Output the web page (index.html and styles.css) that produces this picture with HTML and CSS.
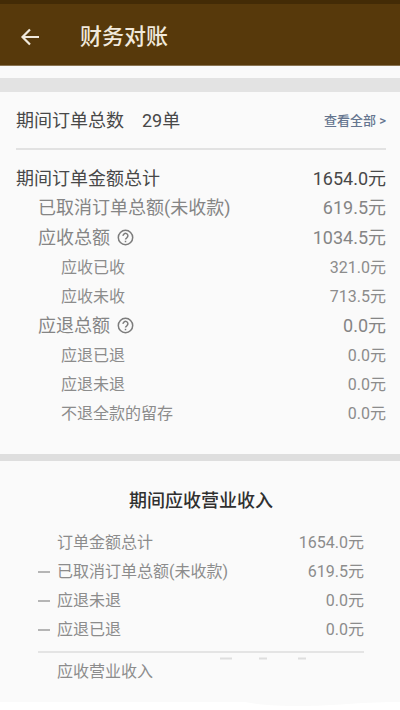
FILE: index.html
```
<!DOCTYPE html>
<html lang="zh">
<head>
    <meta charset="UTF-8">
    <meta name="viewport" content="width=device-width, initial-scale=1.0">
    <title>财务对账</title>
    <link rel="stylesheet" href="styles.css">
</head>
<body>

<header class="topbar">
    <button type="button" class="back" aria-label="返回">
        <svg width="20" height="18" viewBox="0 0 20 18"><path d="M10 1.5 2.5 9l7.500 7.500M2.500 9H19" fill="none" stroke="#f1e9dc" stroke-width="2.200"/></svg>
    </button>
    <h1>财务对账</h1>
</header>

<main>
    <!-- 订单汇总 -->
    <section class="orders">
        <div class="count">
            <h2>期间订单总数</h2>
            <span class="count-num">29单</span>
            <a href="#all">查看全部 &gt;</a>
        </div>
        <dl class="summary">
            <div class="row total"><dt>期间订单金额总计</dt><dd>1654.0元</dd></div>
            <div class="row level1"><dt>已取消订单总额(未收款)</dt><dd>619.5元</dd></div>
            <div class="row level1 group">
                <dt>应收总额
                    <button type="button" class="help" aria-label="应收总额说明">
                        <svg width="17" height="17" viewBox="0 0 17 17" fill="none" stroke="#7c7c7c" stroke-width="1.500"><circle cx="8.500" cy="8.500" r="7.200"/><path d="M6.100 6.900a2.400 2.400 0 1 1 3.800 1.800C9 9.300 8.500 9.600 8.500 10.600M8.500 11.700v1.500"/></svg>
                    </button>
                </dt>
                <dd>1034.5元</dd>
            </div>
            <div class="row level2 first"><dt>应收已收</dt><dd>321.0元</dd></div>
            <div class="row level2"><dt>应收未收</dt><dd>713.5元</dd></div>
            <div class="row level1">
                <dt>应退总额
                    <button type="button" class="help" aria-label="应退总额说明">
                        <svg width="17" height="17" viewBox="0 0 17 17" fill="none" stroke="#7c7c7c" stroke-width="1.500"><circle cx="8.500" cy="8.500" r="7.200"/><path d="M6.100 6.900a2.400 2.400 0 1 1 3.800 1.800C9 9.300 8.500 9.600 8.500 10.600M8.500 11.700v1.500"/></svg>
                    </button>
                </dt>
                <dd>0.0元</dd>
            </div>
            <div class="row level2 first"><dt>应退已退</dt><dd>0.0元</dd></div>
            <div class="row level2"><dt>应退未退</dt><dd>0.0元</dd></div>
            <div class="row level2"><dt>不退全款的留存</dt><dd>0.0元</dd></div>
        </dl>
    </section>

    <!-- 营业收入 -->
    <section class="income">
        <h2>期间应收营业收入</h2>
        <dl class="detail">
            <div class="row"><dt>订单金额总计</dt><dd>1654.0元</dd></div>
            <div class="row minus"><dt>已取消订单总额(未收款)</dt><dd>619.5元</dd></div>
            <div class="row minus"><dt>应退未退</dt><dd>0.0元</dd></div>
            <div class="row minus"><dt>应退已退</dt><dd>0.0元</dd></div>
            <div class="row result">
                <dt>应收营业收入</dt>
                <dd><svg width="150" height="20" viewBox="0 0 150 20"><path d="M6 1.500h12M45 1.500h8M84 1.500h8" stroke="#dedede" stroke-width="2"/></svg></dd>
            </div>
        </dl>
    </section>
</main>

<svg class="edge" viewBox="0 0 400 6" preserveAspectRatio="none"><path d="M245 0C262 3 280 4 302 4 330 4 350 1 390 0Z" fill="#fafafa"/></svg>

</body>
</html>
```
FILE: styles.css
```
* { box-sizing: border-box; }
body { margin: 0; background: #fff; color: #484848; font-family: Roboto, "Noto Sans CJK SC", sans-serif; font-size: 18px; }
h1, h2, dl, dd { margin: 0; }
h2 { font-size: 18px; font-weight: 400; }
button { padding: 0; border: 0; background: none; cursor: pointer; }
svg { display: block; }

.topbar { display: flex; align-items: center; gap: 40px; height: 66px; padding: 4px 20px 0; background: #57390b; border-top: 4px solid #432b06; border-bottom: 1px solid #8a7452; }
.topbar h1 { color: #f1e9dc; font-size: 22px; font-weight: 500; line-height: 32px; }

main { padding-top: 12px; background: #fafafa; }

.orders { padding: 0 14px 26px 16px; border-top: 14px solid #e3e3e3; }
.count { display: flex; align-items: center; padding: 14px 0 12px; line-height: 30px; border-bottom: 2px solid #e2e2e2; }
.count-num { margin-left: 18px; }
.count a { margin-left: auto; color: #65758f; font-size: 13px; font-weight: 500; text-decoration: none; }

.summary { padding-top: 14px; }
.row { display: flex; justify-content: space-between; line-height: 29px; }
.total { color: #484848; }
.level1 { padding-left: 22px; color: #858585; }
.level1 dt { display: flex; align-items: center; gap: 7px; }
.level2 { padding-left: 45px; color: #8c8c8c; font-size: 16px; }
.group, .first { margin-top: 1px; }

.income { padding: 25px 36px 16px 38px; border-top: 7px solid #dedede; }
.income h2 { color: #303030; font-weight: 500; line-height: 30px; text-align: center; }
.detail { padding-top: 12px; color: #8c8c8c; font-size: 16px; }
.detail .row { padding-left: 19px; }
.detail .minus { align-items: center; gap: 7px; padding-left: 0; }
.minus::before { content: ""; width: 12px; height: 2px; background: #b5b5b5; }
.minus dd { margin-left: auto; }
.detail .result { margin-top: 7px; padding-top: 4px; border-top: 2px solid #e4e4e4; }

.edge { width: 100%; height: 6px; }
```
